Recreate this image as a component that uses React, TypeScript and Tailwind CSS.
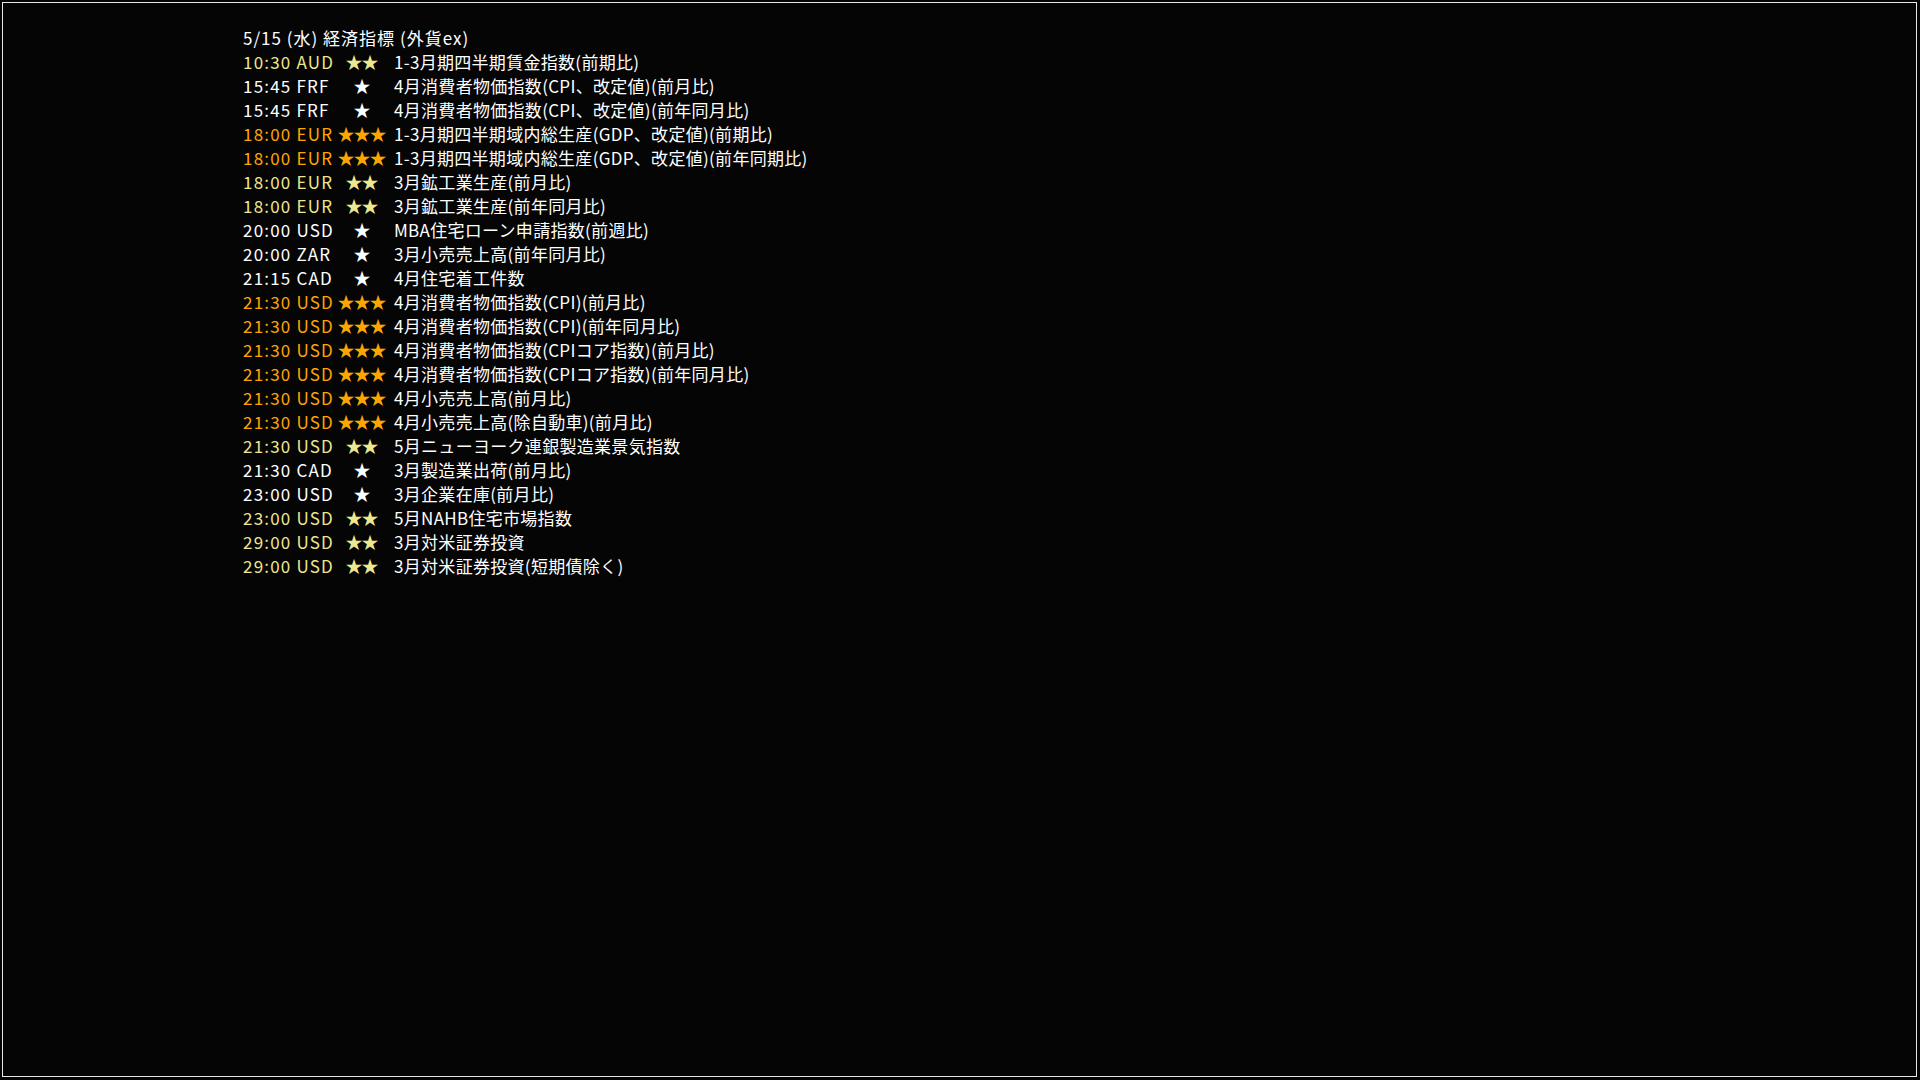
const rows: [string, number, string][] = [
  ['10:30 AUD', 2, '1-3月期四半期賃金指数(前期比)'],
  ['15:45 FRF', 1, '4月消費者物価指数(CPI、改定値)(前月比)'],
  ['15:45 FRF', 1, '4月消費者物価指数(CPI、改定値)(前年同月比)'],
  ['18:00 EUR', 3, '1-3月期四半期域内総生産(GDP、改定値)(前期比)'],
  ['18:00 EUR', 3, '1-3月期四半期域内総生産(GDP、改定値)(前年同期比)'],
  ['18:00 EUR', 2, '3月鉱工業生産(前月比)'],
  ['18:00 EUR', 2, '3月鉱工業生産(前年同月比)'],
  ['20:00 USD', 1, 'MBA住宅ローン申請指数(前週比)'],
  ['20:00 ZAR', 1, '3月小売売上高(前年同月比)'],
  ['21:15 CAD', 1, '4月住宅着工件数'],
  ['21:30 USD', 3, '4月消費者物価指数(CPI)(前月比)'],
  ['21:30 USD', 3, '4月消費者物価指数(CPI)(前年同月比)'],
  ['21:30 USD', 3, '4月消費者物価指数(CPIコア指数)(前月比)'],
  ['21:30 USD', 3, '4月消費者物価指数(CPIコア指数)(前年同月比)'],
  ['21:30 USD', 3, '4月小売売上高(前月比)'],
  ['21:30 USD', 3, '4月小売売上高(除自動車)(前月比)'],
  ['21:30 USD', 2, '5月ニューヨーク連銀製造業景気指数'],
  ['21:30 CAD', 1, '3月製造業出荷(前月比)'],
  ['23:00 USD', 1, '3月企業在庫(前月比)'],
  ['23:00 USD', 2, '5月NAHB住宅市場指数'],
  ['29:00 USD', 2, '3月対米証券投資'],
  ['29:00 USD', 2, '3月対米証券投資(短期債除く)'],
];

function Row({ time, stars, title }: { time: string; stars: number; title: string }) {
  const color = stars === 3 ? 'text-[#ffa500]' : stars === 2 ? 'text-[#f0e68c]' : 'text-white';
  return (
    <div className="flex h-6 items-center">
      <div className={`w-[93px] shrink-0 tracking-[1.2px] ${color}`}>{time}</div>
      <div className={`w-[51px] shrink-0 text-center tracking-[-1px] ${color}`}>{'★'.repeat(stars)}</div>
      <div className="ml-[7px] tracking-[0.3px] text-white">{title}</div>
    </div>
  );
}

export default function App() {
  return (
    <div className="h-[1080px] w-[1920px] bg-[#050505] pt-[2px] pl-[2px] pr-[3px] pb-[3px]">
      <div
        className="h-full w-full border border-[#e8e8e8] pl-[240px] pt-[23px] text-[17px] leading-6 whitespace-nowrap"
        style={{ fontFamily: '"Noto Sans CJK JP", "DejaVu Sans", sans-serif' }}
      >
        <div className="flex h-6 items-center tracking-[1px] text-white">5/15 (水) 経済指標 (外貨ex)</div>
        {rows.map(([time, stars, title], i) => (
          <Row key={i} time={time} stars={stars} title={title} />
        ))}
      </div>
    </div>
  );
}
